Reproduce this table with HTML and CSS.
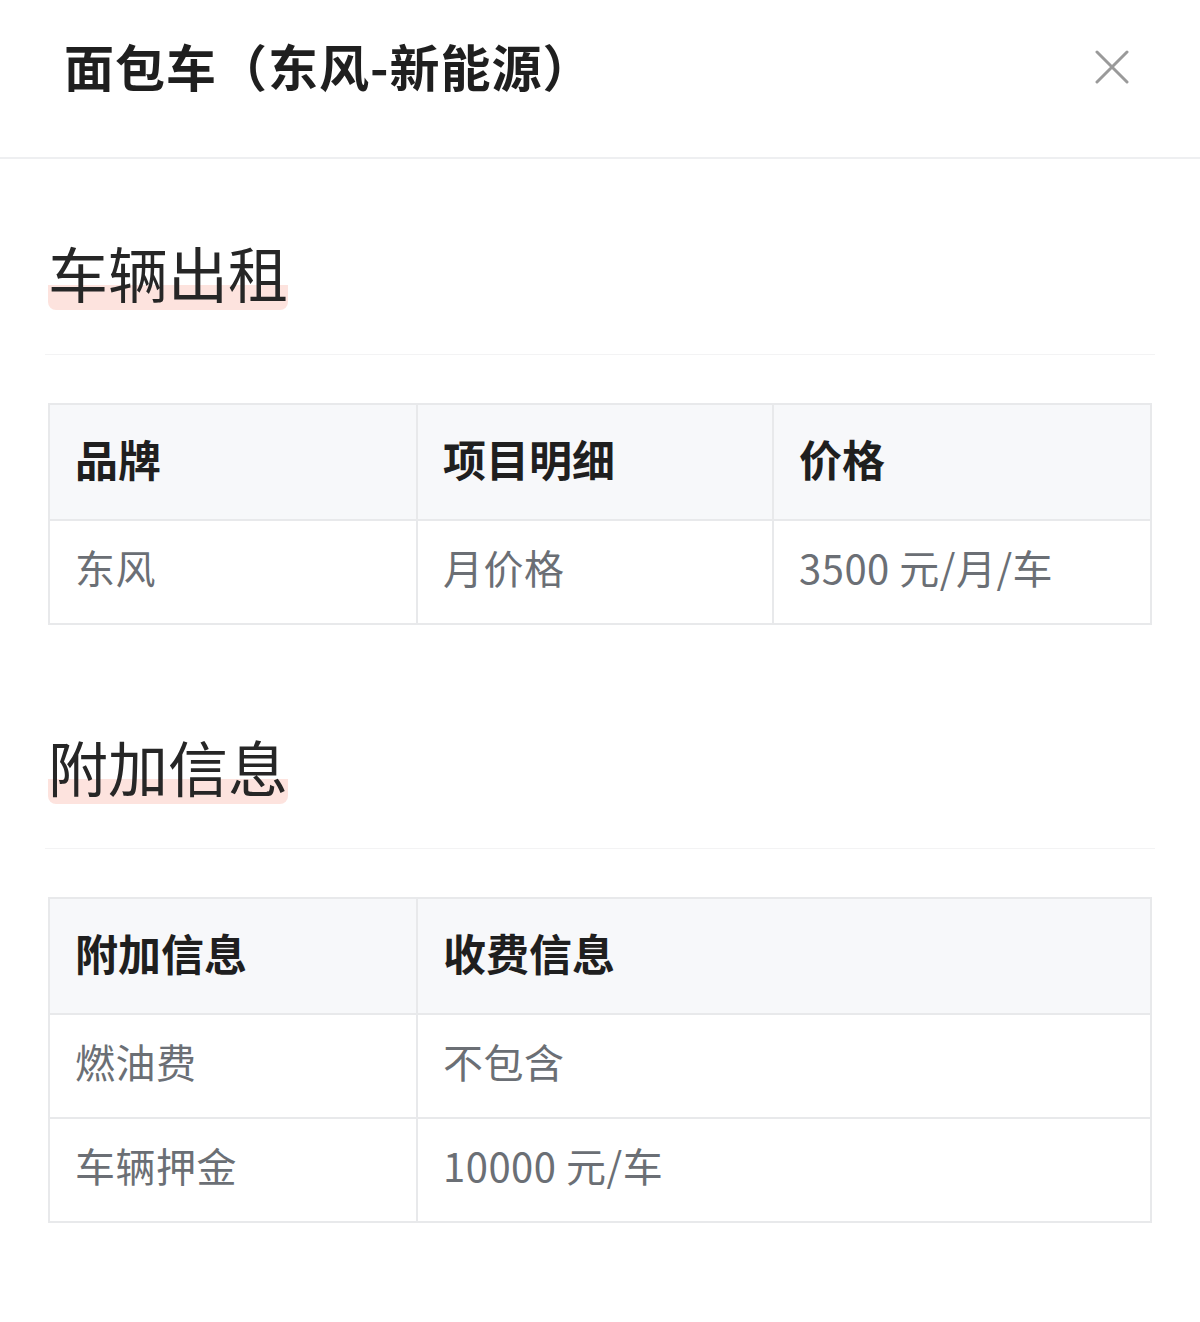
FILE: index.html
```html
<!DOCTYPE html>
<html lang="zh-CN">
<head>
<meta charset="utf-8">
<title>面包车（东风-新能源）</title>
<link rel="stylesheet" href="styles.css">
</head>
<body>
<div class="header">
  <h1 class="title">面包车（东风-新能源）</h1>
  <svg class="close" width="34" height="34" viewBox="0 0 34 34" aria-label="关闭">
    <path d="M2 2 L32 32 M32 2 L2 32" stroke="#9a9a9a" stroke-width="3" stroke-linecap="round" fill="none"/>
  </svg>
</div>
<div class="content">
  <section class="section">
    <h2 class="sec-title"><span class="mark">车辆出租</span></h2>
    <div class="divider"></div>
    <table class="tbl">
      <colgroup><col class="c1"><col class="c2"><col class="c3"></colgroup>
      <thead><tr><th>品牌</th><th>项目明细</th><th>价格</th></tr></thead>
      <tbody><tr><td>东风</td><td>月价格</td><td>3500 元/月/车</td></tr></tbody>
    </table>
  </section>
  <section class="section">
    <h2 class="sec-title"><span class="mark">附加信息</span></h2>
    <div class="divider"></div>
    <table class="tbl">
      <colgroup><col class="c1"><col class="c23"></colgroup>
      <thead><tr><th>附加信息</th><th>收费信息</th></tr></thead>
      <tbody>
        <tr><td>燃油费</td><td>不包含</td></tr>
        <tr><td>车辆押金</td><td>10000 元/车</td></tr>
      </tbody>
    </table>
  </section>
</div>
</body>
</html>
```
FILE: styles.css
```css
html, body {
  margin: 0;
  padding: 0;
  background: #fff;
}
body {
  font-family: "Noto Sans CJK SC", "Noto Sans", sans-serif;
  color: #222;
}
.header {
  box-sizing: border-box;
  height: 159px;
  border-bottom: 2px solid #eeeff1;
  display: flex;
  justify-content: space-between;
  align-items: flex-start;
  padding: 40px 71px 0 64px;
}
.title {
  margin: 0;
  font-size: 50px;
  line-height: 50px;
  font-weight: 700;
  color: #1f1f1f;
  letter-spacing: 1px;
}
.close {
  margin-top: 10px;
  display: block;
}
.content {
  padding: 0 48px;
}
.section {
  padding-top: 83px;
}
.section + .section {
  padding-top: 111px;
}
.sec-title {
  margin: 0;
  font-size: 60px;
  line-height: 60px;
  font-weight: 400;
  color: #262626;
}
.mark {
  display: inline-block;
  padding-bottom: 8px;
  border-radius: 8px;
  background: linear-gradient(to bottom, transparent 63%, #fde3de 63%);
}
.divider {
  height: 1px;
  background: #f3f3f4;
  margin: 44px -3px 48px -3px;
}
.tbl {
  width: 100%;
  border-collapse: collapse;
  border: 2px solid #e8e9eb;
  table-layout: fixed;
}
.c1 { width: 368px; }
.c2 { width: 356px; }
.c3 { width: auto; }
.tbl th, .tbl td {
  text-align: left;
  border: 2px solid #e8e9eb;
  padding: 0 0 0 25px;
}
.tbl th {
  height: 106px;
  padding-bottom: 8px;
  background: #f7f8fa;
  font-size: 43px;
  font-weight: 700;
  color: #1f1f1f;
  border-bottom: none;
  border-top: none;
}
.tbl td {
  height: 92px;
  padding-bottom: 10px;
  font-size: 40px;
  font-weight: 400;
  color: #6b6f75;
  letter-spacing: 0.5px;
}
```
